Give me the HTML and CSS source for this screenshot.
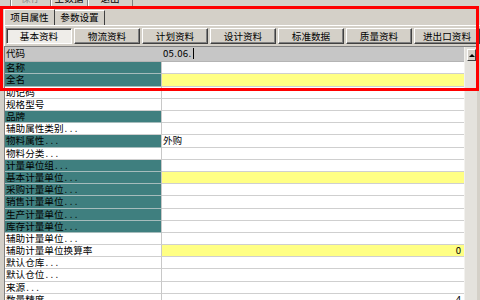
FILE: index.html
```html
<!DOCTYPE html>
<html lang="zh-CN">
<head>
<meta charset="utf-8">
<title>物料</title>
<link rel="stylesheet" href="styles.css">
</head>
<body>
<div class="toolbar">
  <div class="tb-btn tb-1 disabled">保存</div>
  <div class="tb-btn tb-2">主数据</div>
  <div class="tb-btn tb-3">退出</div>
</div>
<div class="main">
  <div class="tabs">
    <div class="tab tab-on">项目属性</div>
    <div class="tab tab-off">参数设置</div>
  </div>
  <div class="panel">
    <div class="subtabs">
      <div class="sub sub-on">基本资料</div>
      <div class="sub">物流资料</div>
      <div class="sub">计划资料</div>
      <div class="sub">设计资料</div>
      <div class="sub">标准数据</div>
      <div class="sub">质量资料</div>
      <div class="sub">进出口资料</div>
    </div>
    <div class="grid">
      <div class="gbody">
        <div class="hrow">
          <div class="hcell">代码</div>
          <div class="hcell hval">05.06.<span class="caret"></span></div>
        </div>
        <div class="rows">
          <div class="lab teal">名称</div><div class="val"></div>
          <div class="lab teal">全名</div><div class="val yellow"></div>
          <div class="lab">助记码</div><div class="val"></div>
          <div class="lab">规格型号</div><div class="val"></div>
          <div class="lab teal">品牌</div><div class="val"></div>
          <div class="lab">辅助属性类别<span class="dots">...</span></div><div class="val"></div>
          <div class="lab teal">物料属性<span class="dots">...</span></div><div class="val">外购</div>
          <div class="lab">物料分类<span class="dots">...</span></div><div class="val"></div>
          <div class="lab teal">计量单位组<span class="dots">...</span></div><div class="val"></div>
          <div class="lab teal">基本计量单位<span class="dots">...</span></div><div class="val yellow"></div>
          <div class="lab teal">采购计量单位<span class="dots">...</span></div><div class="val"></div>
          <div class="lab teal">销售计量单位<span class="dots">...</span></div><div class="val"></div>
          <div class="lab teal">生产计量单位<span class="dots">...</span></div><div class="val"></div>
          <div class="lab teal">库存计量单位<span class="dots">...</span></div><div class="val"></div>
          <div class="lab">辅助计量单位<span class="dots">...</span></div><div class="val"></div>
          <div class="lab">辅助计量单位换算率</div><div class="val yellow num">0</div>
          <div class="lab">默认仓库<span class="dots">...</span></div><div class="val"></div>
          <div class="lab">默认仓位<span class="dots">...</span></div><div class="val"></div>
          <div class="lab">来源<span class="dots">...</span></div><div class="val"></div>
          <div class="lab">数量精度</div><div class="val num">4</div>
        </div>
      </div>
      <div class="sb">
        <div class="sb-up"><span class="arrow"></span></div>
      </div>
    </div>
  </div>
</div>
<div class="redframe"></div>
</body>
</html>
```
FILE: styles.css
```css
html, body {
  margin: 0;
  padding: 0;
}
body {
  width: 480px;
  height: 300px;
  overflow: hidden;
  position: relative;
  background: #d4d0c8;
  font-family: "Noto Sans CJK SC", "Noto Sans", sans-serif;
  font-size: 9.6px;
  color: #000;
}

/* cut-off toolbar at the very top */
.toolbar {
  height: 6px;
  overflow: hidden;
  display: flex;
  align-items: flex-end;
  padding-left: 10px;
}
.tb-btn {
  flex: none;
  height: 14px;
  line-height: 12px;
  text-align: center;
  border-left: 1px solid #808080;
  box-shadow: inset 1px 0 #ffffff;
}
.tb-1 { width: 39px; }
.tb-2 { width: 36px; }
.tb-3 { width: 44px; border-right: 1px solid #808080; }
.disabled { color: #8a8a8a; }

.main {
  padding: 3px 0 0 4px;
}

/* top tabs */
.tabs {
  display: flex;
  align-items: flex-end;
  height: 16px;
}
.tab {
  box-sizing: border-box;
  text-align: center;
  border-style: solid;
  border-width: 1px 1px 0 1px;
  border-color: #ffffff #404040 transparent #ffffff;
}
.tab-on {
  width: 51px;
  height: 16px;
  line-height: 14px;
}
.tab-off {
  width: 50px;
  height: 15px;
  line-height: 13px;
  border-left: none;
}

.panel {
  border-top: 1px solid #ffffff;
  border-left: 1px solid #ffffff;
  padding: 2px 0 0 1px;
}

/* sub tabs (buttons) */
.subtabs {
  display: flex;
  gap: 2px;
  height: 16px;
}
.sub {
  box-sizing: border-box;
  width: 66px;
  height: 16px;
  line-height: 14px;
  text-align: center;
  border: 1px solid;
  border-color: #ffffff #404040 #404040 #ffffff;
  box-shadow: inset -1px -1px #808080;
}
.sub-on {
  background: #efede9;
  border-color: #808080 #ffffff #ffffff #808080;
  box-shadow: inset 1px 1px #404040;
}

/* grid */
.grid {
  margin-top: 2px;
  margin-left: -2px;
  width: 473px;
  height: 260px;
  display: flex;
  box-sizing: border-box;
  border-top: 1px solid #808080;
  border-left: 1px solid #808080;
  background: #ffffff;
}
.gbody {
  flex: 1;
  display: flex;
  flex-direction: column;
}
.hrow {
  display: grid;
  grid-template-columns: 157px 1fr;
  height: 17px;
  background: #c6c6c6;
  box-sizing: border-box;
  border-bottom: 1px solid #b4b4b4;
}
.hcell {
  padding-left: 1px;
  line-height: 13px;
}
.hval {
  display: flex;
  align-items: flex-start;
  letter-spacing: 0.3px;
}
.caret {
  display: inline-block;
  width: 1px;
  height: 11px;
  margin: 1px 0 0 2px;
  background: #000000;
}
.rows {
  display: grid;
  grid-template-columns: 157px 1fr;
  grid-auto-rows: 12.2px;
}
.lab, .val {
  box-sizing: border-box;
  border-bottom: 1px solid #cfcfcf;
  padding-left: 1px;
  line-height: 11px;
  white-space: nowrap;
  overflow: hidden;
}
.lab {
  border-right: 1px solid #c8c8c8;
  background: #ffffff;
}
.teal {
  background: #3f7f7f;
  border-bottom-color: #a6bcbc;
}
.val { background: #ffffff; }
.yellow { background: #ffff84; }
.num {
  text-align: right;
  padding-right: 3px;
}
.dots {
  letter-spacing: 2.4px;
  margin-left: 1px;
}

/* scrollbar */
.sb {
  width: 13px;
  flex: none;
  box-sizing: border-box;
  background: #e4e2dd;
  border-left: 1px solid #f2f1ee;
  padding: 2px 1px 0 2px;
}
.sb-up {
  box-sizing: border-box;
  height: 12px;
  background: #d4d0c8;
  border: 1px solid;
  border-color: #ffffff #404040 #404040 #ffffff;
  display: flex;
  align-items: center;
  justify-content: center;
}
.arrow {
  width: 0;
  height: 0;
  border-left: 3px solid transparent;
  border-right: 3px solid transparent;
  border-bottom: 3px solid #000000;
}

/* red annotation frame overlaid on the screenshot */
.redframe {
  position: absolute;
  left: 0;
  top: 6px;
  width: 479px;
  height: 85px;
  box-sizing: border-box;
  border: 3px solid #ff0000;
  pointer-events: none;
}
```
